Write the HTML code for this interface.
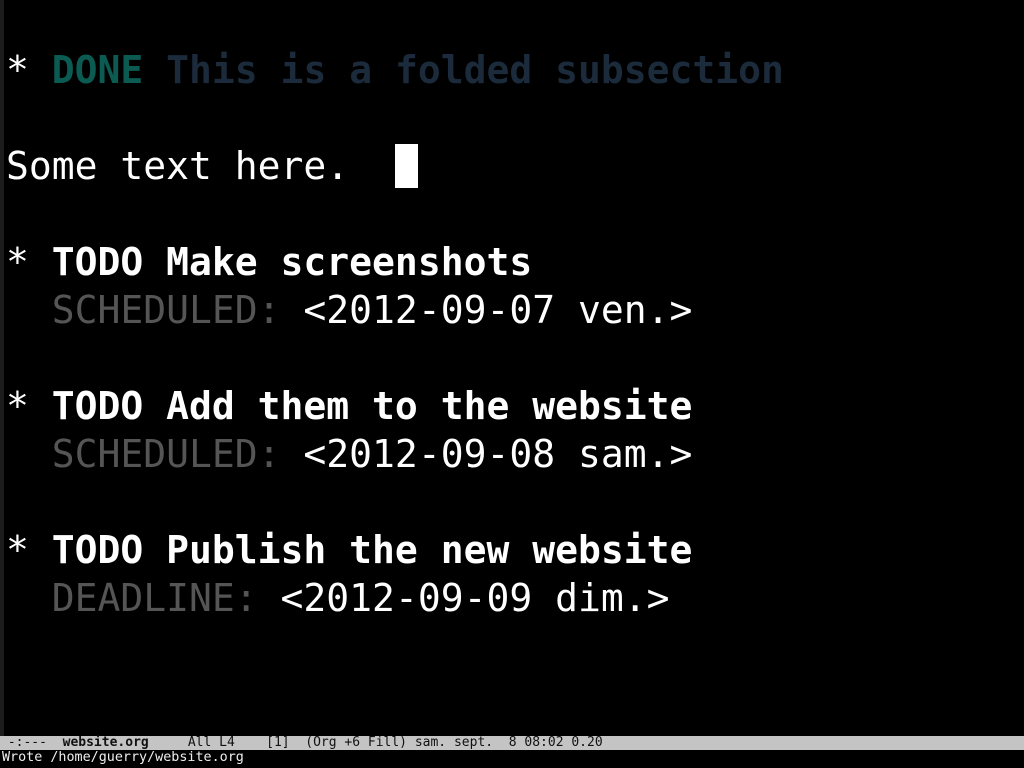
<!DOCTYPE html>
<html><head><meta charset="utf-8"><style>
html,body{margin:0;padding:0;background:#000;width:1024px;height:768px;overflow:hidden}
.fr{position:absolute;left:0;top:0;width:4px;height:736px;background:#1c1c1c}
.buf{position:absolute;left:6px;top:-2px;font-family:"DejaVu Sans Mono","Liberation Mono",monospace;font-size:38px;line-height:48px;color:#fff;white-space:pre}
.l{height:48px}
b{font-weight:bold}
.done{color:#0b5b52;font-weight:bold}
.fold{color:#1b2b3b;font-weight:bold}
.g{color:#555}
.cur{position:absolute;left:395px;top:144px;width:23px;height:44px;background:#fff}
.ml{position:absolute;left:0;top:736px;width:1024px;height:14px;background:#c4c4c4;color:#111;font-family:"DejaVu Sans Mono",monospace;font-size:13px;line-height:14px;white-space:pre}
.ea{position:absolute;left:0;top:750px;width:1024px;height:18px;color:#eee;font-family:"DejaVu Sans Mono",monospace;font-size:13.4px;line-height:16px;white-space:pre;padding-left:2px}
</style></head><body>
<div class="fr"></div>
<div class="buf"><div class="l"> </div><div class="l">* <span class="done">DONE</span> <span class="fold">This is a folded subsection</span></div><div class="l"> </div><div class="l">Some text here.</div><div class="l"> </div><div class="l">* <b>TODO Make screenshots</b></div><div class="l">  <span class="g">SCHEDULED:</span> &lt;2012-09-07 ven.&gt;</div><div class="l"> </div><div class="l">* <b>TODO Add them to the website</b></div><div class="l">  <span class="g">SCHEDULED:</span> &lt;2012-09-08 sam.&gt;</div><div class="l"> </div><div class="l">* <b>TODO Publish the new website</b></div><div class="l">  <span class="g">DEADLINE:</span> &lt;2012-09-09 dim.&gt;</div></div>
<div class="cur"></div>
<div class="ml"> -:---  <b>website.org</b>     All L4    [1]  (Org +6 Fill) sam. sept.  8 08:02 0.20</div>
<div class="ea">Wrote /home/guerry/website.org</div>
</body></html>
